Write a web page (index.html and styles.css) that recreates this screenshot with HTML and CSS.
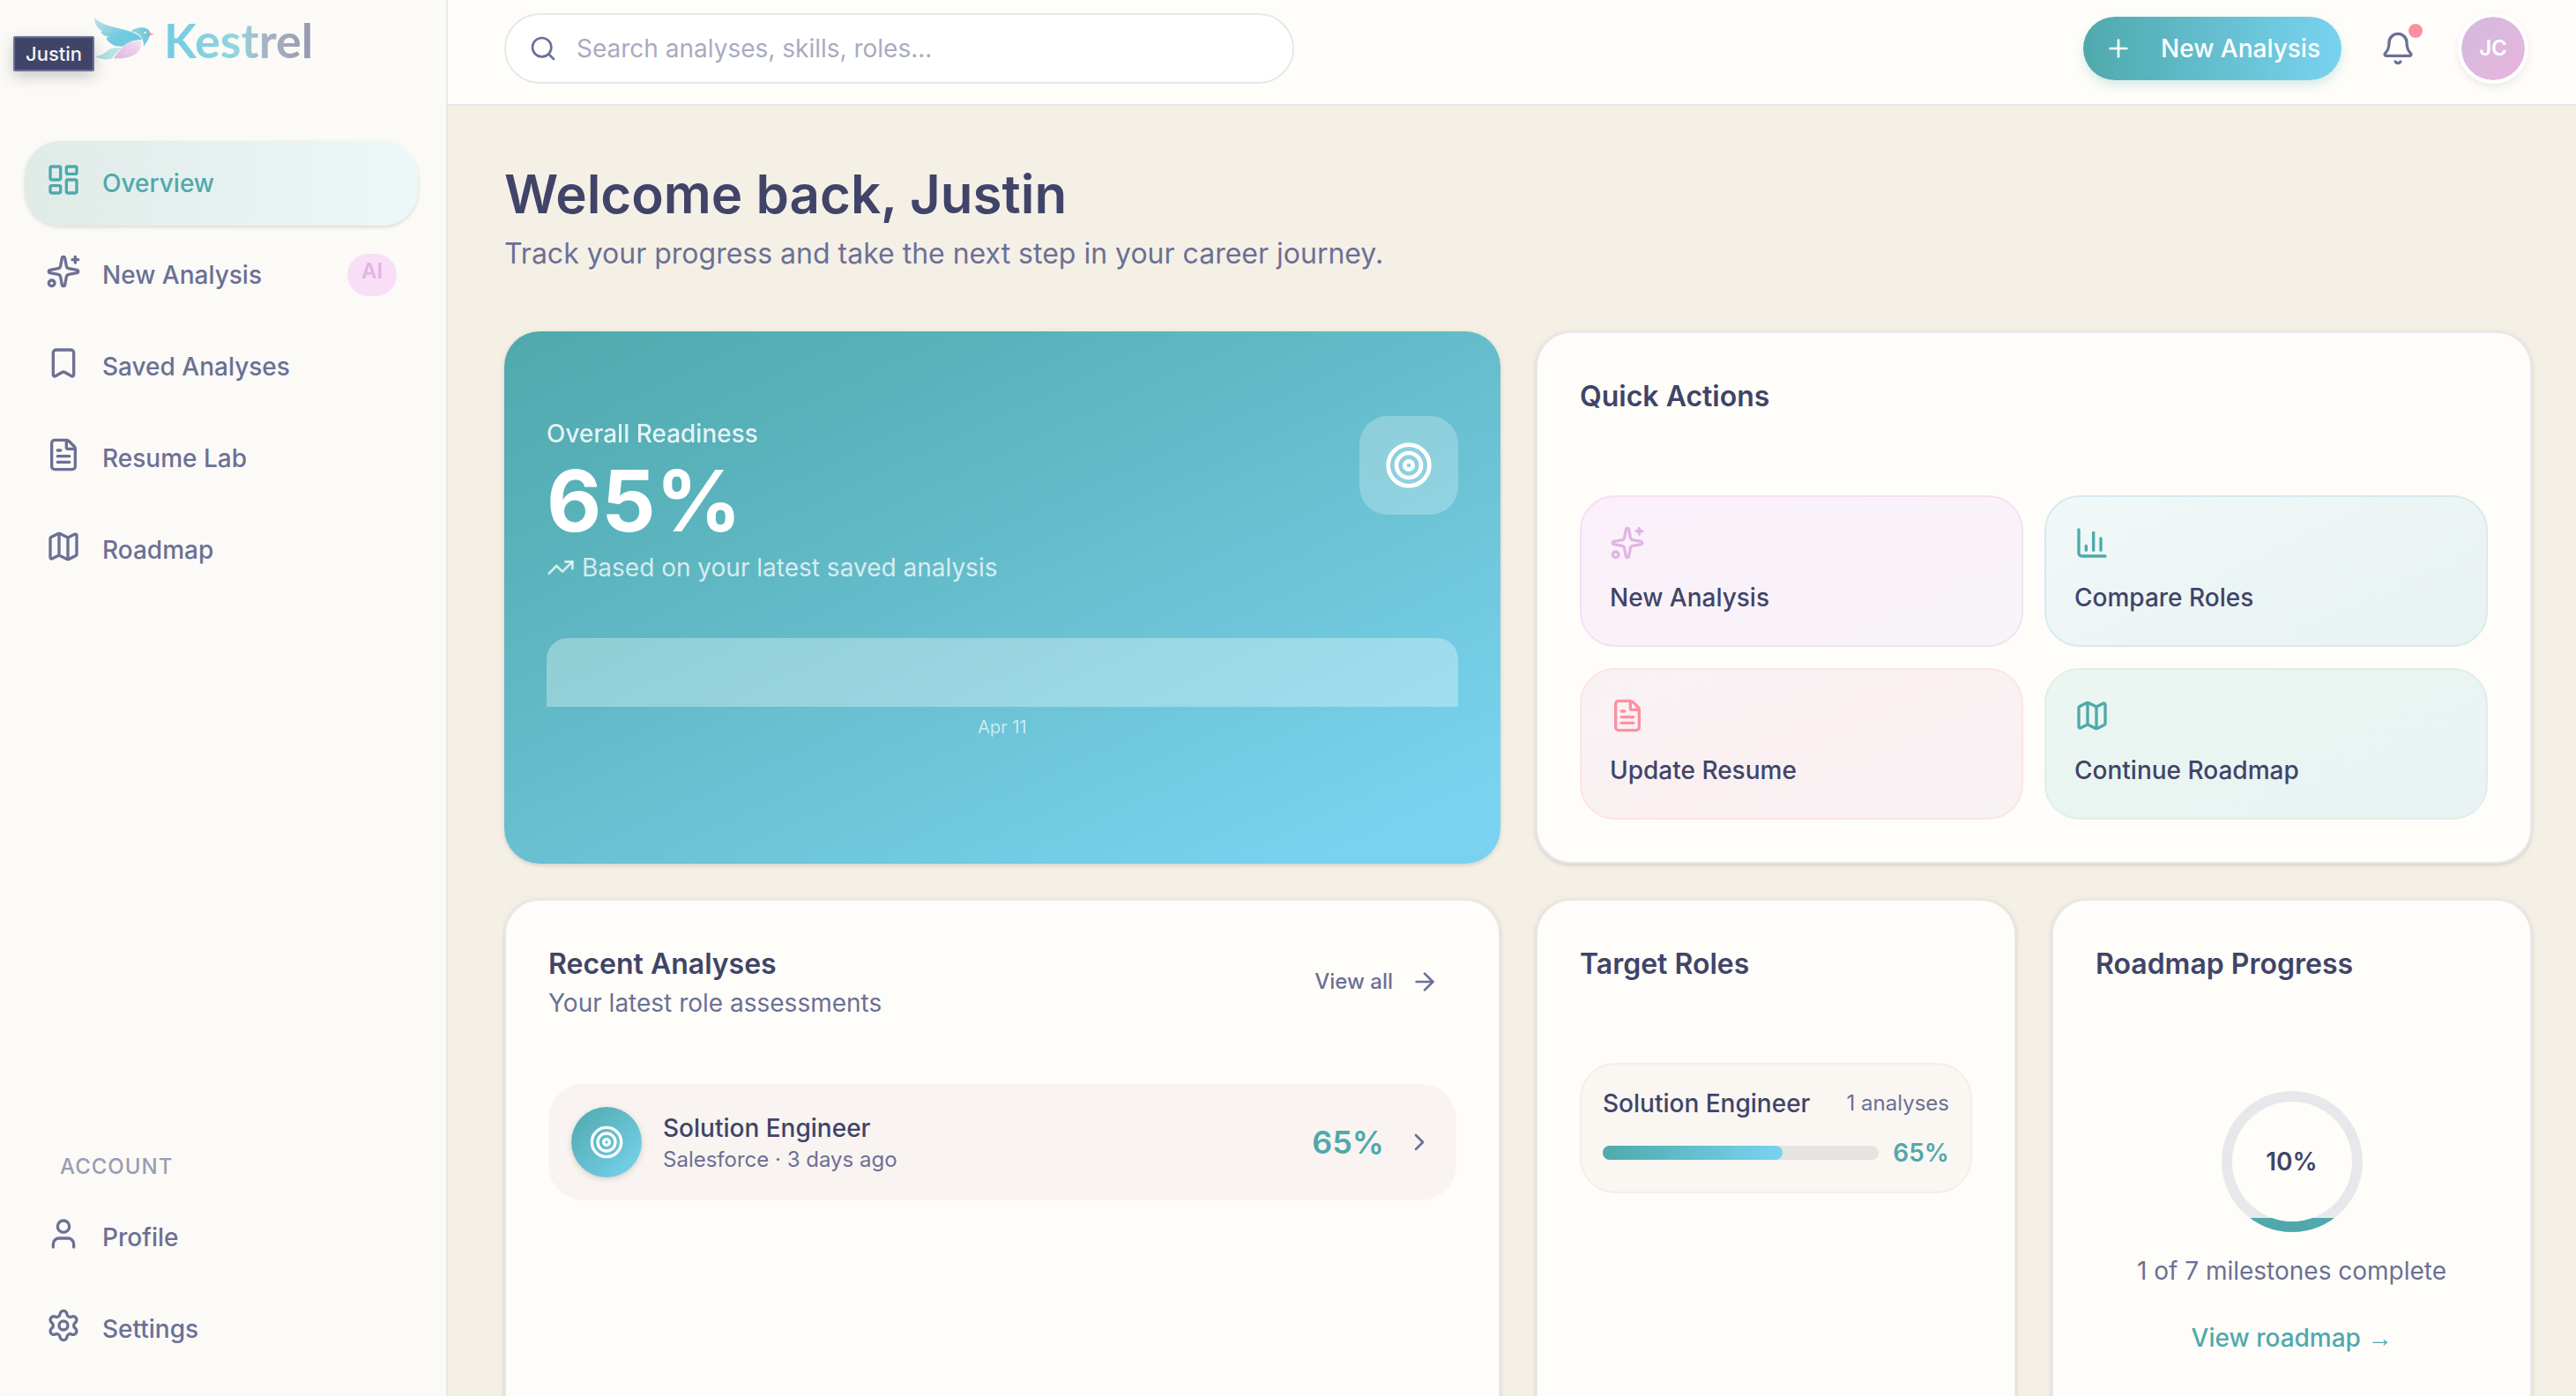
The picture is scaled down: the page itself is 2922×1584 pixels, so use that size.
FILE: index.html
```html
<!DOCTYPE html>
<html lang="en">
<head>
<meta charset="utf-8">
<meta name="viewport" content="width=device-width, initial-scale=1">
<title>Kestrel – Overview</title>
<link rel="stylesheet" href="styles.css">
</head>
<body>
<svg class="sprite" aria-hidden="true">
  <symbol id="i-dashboard" viewBox="0 0 24 24"><rect width="7" height="9" x="3" y="3" rx="1"/><rect width="7" height="5" x="14" y="3" rx="1"/><rect width="7" height="9" x="14" y="12" rx="1"/><rect width="7" height="5" x="3" y="16" rx="1"/></symbol>
  <symbol id="i-sparkles" viewBox="0 0 24 24"><path d="M11.017 2.814a1 1 0 0 1 1.966 0l1.051 5.558a2 2 0 0 0 1.594 1.594l5.558 1.051a1 1 0 0 1 0 1.966l-5.558 1.051a2 2 0 0 0-1.594 1.594l-1.051 5.558a1 1 0 0 1-1.966 0l-1.051-5.558a2 2 0 0 0-1.594-1.594l-5.558-1.051a1 1 0 0 1 0-1.966l5.558-1.051a2 2 0 0 0 1.594-1.594z"/><path d="M20 2v4"/><path d="M22 4h-4"/><circle cx="4" cy="20" r="2"/></symbol>
  <symbol id="i-bookmark" viewBox="0 0 24 24"><path d="M17 3a2 2 0 0 1 2 2v15a1 1 0 0 1-1.496.868l-4.512-2.578a2 2 0 0 0-1.984 0l-4.512 2.578A1 1 0 0 1 5 20V5a2 2 0 0 1 2-2z"/></symbol>
  <symbol id="i-file" viewBox="0 0 24 24"><path d="M6 22a2 2 0 0 1-2-2V4a2 2 0 0 1 2-2h8a2.4 2.4 0 0 1 1.704.706l3.588 3.588A2.4 2.4 0 0 1 20 8v12a2 2 0 0 1-2 2z"/><path d="M14 2v5a1 1 0 0 0 1 1h5"/><path d="M10 9H8"/><path d="M16 13H8"/><path d="M16 17H8"/></symbol>
  <symbol id="i-map" viewBox="0 0 24 24"><path d="M14.106 5.553a2 2 0 0 0 1.788 0l3.659-1.83A1 1 0 0 1 21 4.619v12.764a1 1 0 0 1-.553.894l-4.553 2.277a2 2 0 0 1-1.788 0l-4.212-2.106a2 2 0 0 0-1.788 0l-3.659 1.83A1 1 0 0 1 3 19.381V6.618a1 1 0 0 1 .553-.894l4.553-2.277a2 2 0 0 1 1.788 0z"/><path d="M15 5.764v15"/><path d="M9 3.236v15"/></symbol>
  <symbol id="i-user" viewBox="0 0 24 24"><path d="M19 21v-2a4 4 0 0 0-4-4H9a4 4 0 0 0-4 4v2"/><circle cx="12" cy="7" r="4"/></symbol>
  <symbol id="i-settings" viewBox="0 0 24 24"><path d="M9.671 4.136a2.34 2.34 0 0 1 4.659 0 2.34 2.34 0 0 0 3.319 1.915 2.34 2.34 0 0 1 2.33 4.033 2.34 2.34 0 0 0 0 3.831 2.34 2.34 0 0 1-2.33 4.033 2.34 2.34 0 0 0-3.319 1.915 2.34 2.34 0 0 1-4.659 0 2.34 2.34 0 0 0-3.32-1.915 2.34 2.34 0 0 1-2.33-4.033 2.34 2.34 0 0 0 0-3.831A2.34 2.34 0 0 1 6.35 6.051a2.34 2.34 0 0 0 3.319-1.915"/><circle cx="12" cy="12" r="3"/></symbol>
  <symbol id="i-search" viewBox="0 0 24 24"><path d="m21 21-4.34-4.34"/><circle cx="11" cy="11" r="8"/></symbol>
  <symbol id="i-plus" viewBox="0 0 24 24"><path d="M5 12h14"/><path d="M12 5v14"/></symbol>
  <symbol id="i-bell" viewBox="0 0 24 24"><path d="M10.268 21a2 2 0 0 0 3.464 0"/><path d="M3.262 15.326A1 1 0 0 0 4 17h16a1 1 0 0 0 .74-1.673C19.41 13.956 18 12.499 18 8A6 6 0 0 0 6 8c0 4.499-1.411 5.956-2.738 7.326"/></symbol>
  <symbol id="i-trend" viewBox="0 0 24 24"><path d="M16 7h6v6"/><path d="m22 7-8.500 8.500-5-5L2 17"/></symbol>
  <symbol id="i-target" viewBox="0 0 24 24"><circle cx="12" cy="12" r="10"/><circle cx="12" cy="12" r="6"/><circle cx="12" cy="12" r="2"/></symbol>
  <symbol id="i-chart" viewBox="0 0 24 24"><path d="M3 3v16a2 2 0 0 0 2 2h16"/><path d="M18 17V9"/><path d="M13 17V5"/><path d="M8 17v-3"/></symbol>
  <symbol id="i-arrow" viewBox="0 0 24 24"><path d="M5 12h14"/><path d="m12 5 7 7-7 7"/></symbol>
  <symbol id="i-chevron" viewBox="0 0 24 24"><path d="m9 18 6-6-6-6"/></symbol>
</svg>

<div class="app">
  <aside class="sidebar">
    <a class="brand" href="#">
      <svg class="brand-mark" viewBox="318 58 208 150" aria-hidden="true">
        <defs>
          <linearGradient id="wing" x1="0" y1="0" x2="1" y2="1"><stop offset="0" stop-color="#c3e4e4"/><stop offset=".55" stop-color="#74cbe0"/><stop offset="1" stop-color="#6cc6dd"/></linearGradient>
          <linearGradient id="head" x1="0" y1="0" x2="1" y2="0"><stop offset="0" stop-color="#9ad6dd"/><stop offset="1" stop-color="#6ac4de"/></linearGradient>
          <linearGradient id="belly" x1="0" y1="1" x2="1" y2="0"><stop offset="0" stop-color="#dfb3e2"/><stop offset="1" stop-color="#f3e1f1"/></linearGradient>
          <linearGradient id="tail" x1="0" y1="0" x2="1" y2="0"><stop offset="0" stop-color="#a8dce0"/><stop offset="1" stop-color="#bfe3e2"/></linearGradient>
        </defs>
        <path fill="url(#wing)" d="M320 61C345 85 380 92 410 99C450 108 478 120 482 137C455 136 436 143 420 158C396 162 376 153 364 138C358 131 364 127 374 124C360 127 346 120 341 109C352 110 344 104 336 99C325 90 320 76 320 61Z"/>
        <path fill="url(#head)" d="M444 106C460 94 485 91 500 99C509 104 511 113 509 122C505 137 494 148 488 160C489 130 474 114 444 106Z"/>
        <path fill="#ff8fa3" d="M507 111L523 118L508 122Z"/>
        <circle cx="493" cy="112" r="4" fill="#e6ece9"/>
        <path fill="url(#belly)" d="M386 200C400 180 412 160 430 149C446 140 466 138 479 142C482 160 474 178 452 190C430 200 408 200 386 200Z"/>
        <path fill="url(#tail)" d="M321 193C345 191 354 182 366 172C378 163 394 164 410 164C398 177 388 190 378 201C360 206 342 203 321 193Z"/>
      </svg>
      <span class="brand-name">Kestrel</span>
    </a>
    <div class="tooltip" role="tooltip">Justin</div>

    <nav class="nav" aria-label="Main">
      <a class="nav-item is-active" href="#"><svg class="icon icon-lg"><use href="#i-dashboard"/></svg><span>Overview</span></a>
      <a class="nav-item" href="#"><svg class="icon icon-lg"><use href="#i-sparkles"/></svg><span>New Analysis</span><span class="badge">AI</span></a>
      <a class="nav-item" href="#"><svg class="icon icon-lg"><use href="#i-bookmark"/></svg><span>Saved Analyses</span></a>
      <a class="nav-item" href="#"><svg class="icon icon-lg"><use href="#i-file"/></svg><span>Resume Lab</span></a>
      <a class="nav-item" href="#"><svg class="icon icon-lg"><use href="#i-map"/></svg><span>Roadmap</span></a>
    </nav>
    <nav class="nav nav-account" aria-labelledby="account-title">
      <h2 class="nav-title" id="account-title">ACCOUNT</h2>
      <a class="nav-item" href="#"><svg class="icon icon-lg"><use href="#i-user"/></svg><span>Profile</span></a>
      <a class="nav-item" href="#"><svg class="icon icon-lg"><use href="#i-settings"/></svg><span>Settings</span></a>
    </nav>
  </aside>

  <div class="page">
    <header class="topbar">
      <label class="search">
        <svg class="icon"><use href="#i-search"/></svg>
        <input type="search" aria-label="Search" placeholder="Search analyses, skills, roles...">
      </label>
      <div class="topbar-actions">
        <button class="btn-primary" type="button"><svg class="icon"><use href="#i-plus"/></svg>New Analysis</button>
        <button class="bell" type="button" aria-label="Notifications"><svg class="icon icon-lg"><use href="#i-bell"/></svg><span class="bell-dot"></span></button>
        <button class="avatar" type="button">JC</button>
      </div>
    </header>

    <main class="content">
      <header class="welcome">
        <h1>Welcome back, Justin</h1>
        <p>Track your progress and take the next step in your career journey.</p>
      </header>

      <div class="grid">
        <section class="hero wide">
          <div class="hero-top">
            <div>
              <p class="hero-label">Overall Readiness</p>
              <p class="hero-value">65%</p>
              <p class="hero-note"><svg class="icon"><use href="#i-trend"/></svg>Based on your latest saved analysis</p>
            </div>
            <div class="hero-icon"><svg class="icon icon-xl"><use href="#i-target"/></svg></div>
          </div>
          <div class="hero-chart">
            <div class="hero-bar"></div>
            <span class="hero-date">Apr 11</span>
          </div>
        </section>

        <section class="card wide">
          <h2 class="card-title">Quick Actions</h2>
          <div class="tiles">
            <a class="tile tile-lilac" href="#"><svg class="icon icon-lg"><use href="#i-sparkles"/></svg><span>New Analysis</span></a>
            <a class="tile tile-sky" href="#"><svg class="icon icon-lg"><use href="#i-chart"/></svg><span>Compare Roles</span></a>
            <a class="tile tile-rose" href="#"><svg class="icon icon-lg"><use href="#i-file"/></svg><span>Update Resume</span></a>
            <a class="tile tile-mint" href="#"><svg class="icon icon-lg"><use href="#i-map"/></svg><span>Continue Roadmap</span></a>
          </div>
        </section>

        <section class="card card-tall wide">
          <div class="card-head">
            <div>
              <h2 class="card-title">Recent Analyses</h2>
              <p class="card-sub">Your latest role assessments</p>
            </div>
            <a class="view-all" href="#">View all<svg class="icon"><use href="#i-arrow"/></svg></a>
          </div>
          <a class="analysis" href="#">
            <span class="analysis-icon"><svg class="icon icon-lg"><use href="#i-target"/></svg></span>
            <span class="analysis-text"><span class="item-title">Solution Engineer</span><span class="item-sub">Salesforce · 3 days ago</span></span>
            <span class="analysis-score">65%</span>
            <svg class="icon"><use href="#i-chevron"/></svg>
          </a>
        </section>

        <section class="card card-tall">
          <h2 class="card-title">Target Roles</h2>
          <div class="role">
            <div class="role-head"><span class="item-title">Solution Engineer</span><span class="item-sub">1 analyses</span></div>
            <div class="role-progress">
              <div class="track"><div class="track-fill" style="width:65%"></div></div>
              <span class="role-score">65%</span>
            </div>
          </div>
        </section>

        <section class="card card-tall">
          <h2 class="card-title">Roadmap Progress</h2>
          <div class="roadmap">
            <div class="ring"><div class="ring-hole">10%</div></div>
            <p>1 of 7 milestones complete</p>
            <a href="#">View roadmap <span class="link-arrow">→</span></a>
          </div>
        </section>
      </div>
    </main>
  </div>
</div>
</body>
</html>
```
FILE: styles.css
```css
:root {
  --ink: #404468;
  --muted: #6b7095;
  --faint: #9a9db3;
  --teal: #4fa9ac;
  --sky: #79d3f0;
  --line: #e7e8ec;
  --paper: #fefdf9;
  --sand: #f5f0e6;
}

* { box-sizing: border-box; }

body {
  margin: 0;
  background: var(--sand);
  color: var(--ink);
  font-family: Inter, "Liberation Sans", sans-serif;
  font-size: 28px;
  line-height: 40px;
}

h1, h2, p { margin: 0; }
a { color: inherit; text-decoration: none; }
button { border: 0; padding: 0; font: inherit; cursor: pointer; }

.sprite { display: none; }

.icon {
  width: 32px;
  height: 32px;
  flex: none;
  fill: none;
  stroke: currentColor;
  stroke-width: 2;
  stroke-linecap: round;
  stroke-linejoin: round;
}
.icon-lg { width: 40px; height: 40px; }
.icon-xl { width: 56px; height: 56px; }

.app { display: flex; height: 100vh; }

/* Sidebar */
.sidebar {
  position: relative;
  display: flex;
  flex-direction: column;
  flex: none;
  width: 508px;
  padding: 16px 32px 28px 28px;
  background: #fbfaf7;
  border-right: 2px solid var(--line);
}

.brand {
  display: flex;
  align-items: center;
  gap: 10px;
  height: 56px;
  padding-left: 78px;
  margin-bottom: 88px;
}
.brand-mark { width: 70px; height: 50px; }
.brand-name {
  padding-top: 4px;
  font-family: Lato, "Open Sans", sans-serif;
  font-size: 54px;
  font-weight: 700;
  line-height: 56px;
  color: transparent;
  background: linear-gradient(90deg, #72cbe4, #93d5df 50%, #a9b3c6 68%, #9597ae);
  background-clip: text;
  -webkit-background-clip: text;
}

.tooltip {
  position: absolute;
  left: 15px;
  top: 41px;
  padding: 0 12px;
  border: 2px solid var(--muted);
  border-radius: 2px;
  background: var(--ink);
  color: #f5f4f1;
  font-size: 22px;
  font-weight: 500;
  line-height: 36px;
  box-shadow: 0 6px 16px rgba(64, 60, 60, .25);
}

.nav { display: flex; flex-direction: column; gap: 8px; }
.nav-account { margin-top: auto; }
.nav-title {
  padding-left: 40px;
  margin-bottom: 8px;
  color: var(--faint);
  font-size: 24px;
  font-weight: 500;
  line-height: 32px;
  letter-spacing: 1px;
}
.nav-item {
  display: flex;
  align-items: center;
  gap: 24px;
  height: 96px;
  padding: 0 24px;
  border-radius: 40px;
  color: var(--muted);
  font-weight: 500;
}
.nav-item .icon { margin-bottom: 8px; }
.nav-item.is-active {
  color: var(--teal);
  background: linear-gradient(90deg, #e0ebe8, #eef7f7);
  box-shadow: 0 2px 4px rgba(90, 70, 60, .18);
}
.badge {
  margin-left: auto;
  width: 56px;
  height: 48px;
  border-radius: 24px;
  background: #f8dff6;
  color: #e0b5e3;
  font-size: 24px;
  font-weight: 600;
  line-height: 40px;
  text-align: center;
}

/* Top bar */
.page { display: flex; flex-direction: column; flex: 1; min-width: 0; }
.topbar {
  display: flex;
  flex: none;
  align-items: flex-start;
  justify-content: space-between;
  height: 120px;
  padding: 15px 50px 0 64px;
  background: var(--paper);
  border-bottom: 2px solid var(--line);
}
.search {
  display: flex;
  align-items: center;
  gap: 22px;
  width: 896px;
  height: 80px;
  padding: 0 26px;
  border: 2px solid var(--line);
  border-radius: 40px;
  background: #fff;
  color: var(--muted);
}
.search input {
  flex: 1;
  min-width: 0;
  padding: 0;
  border: 0;
  outline: 0;
  background: none;
  color: var(--ink);
  font: inherit;
}
.search input::placeholder { color: #a9abc0; opacity: 1; }

.topbar-actions { display: flex; align-items: center; gap: 24px; }
.btn-primary {
  display: flex;
  align-items: center;
  gap: 32px;
  height: 72px;
  padding: 0 24px;
  border-radius: 36px;
  background: linear-gradient(90deg, var(--teal), var(--sky));
  color: #fff;
  font-weight: 500;
  box-shadow: 0 6px 12px rgba(79, 169, 172, .22);
}
.bell {
  position: relative;
  display: grid;
  place-items: center;
  width: 80px;
  height: 80px;
  background: none;
  color: var(--muted);
}
.bell-dot {
  position: absolute;
  top: 8px;
  right: 8px;
  width: 24px;
  height: 24px;
  border: 4px solid #fff;
  border-radius: 50%;
  background: #ff8fa3;
}
.avatar {
  width: 80px;
  height: 80px;
  margin: 0 4px;
  border: 4px solid #fff;
  border-radius: 50%;
  background: linear-gradient(135deg, #d3bae0, #e8b5dc) padding-box;
  color: #fff;
  font-size: 24px;
  font-weight: 600;
  box-shadow: 0 4px 8px rgba(64, 68, 104, .1);
}

/* Content */
.content {
  flex: 1;
  min-height: 0;
  overflow: auto;
  scrollbar-width: none;
  padding: 64px 50px 64px 64px;
}
.welcome { margin-bottom: 64px; }
.welcome h1 { font-size: 60px; font-weight: 600; line-height: 72px; }
.welcome p { margin-top: 8px; color: var(--muted); font-size: 32px; line-height: 48px; }

.grid { display: grid; grid-template-columns: repeat(4, minmax(0, 1fr)); gap: 40px; }
.wide { grid-column: span 2; }

.card, .hero {
  border-radius: 40px;
  box-shadow: 0 2px 4px rgba(64, 60, 90, .14), 0 0 8px rgba(150, 110, 90, .08);
}
.card { padding: 48px; border: 2px solid var(--line); background: var(--paper); }
.card-tall { min-height: 640px; }
.card-title { font-size: 32px; font-weight: 600; line-height: 48px; }
.card-sub { color: var(--muted); line-height: 40px; }

.hero {
  padding: 96px 48px 48px;
  background: linear-gradient(155deg, var(--teal), #5cb5bf 30%, #6cc3d6 60%, var(--sky) 92%);
  color: #fff;
}
.hero-top { display: flex; justify-content: space-between; align-items: flex-start; }
.hero-label { font-weight: 500; opacity: .85; }
.hero-value { margin: 8px 0; font-size: 96px; font-weight: 700; line-height: 96px; }
.hero-note { display: flex; align-items: center; gap: 8px; color: rgba(255, 255, 255, .75); }
.hero-icon {
  display: grid;
  place-items: center;
  width: 112px;
  height: 112px;
  border-radius: 32px;
  background: rgba(255, 255, 255, .25);
}
.hero-chart { margin-top: 60px; text-align: center; }
.hero-bar { height: 78px; border-radius: 24px 24px 0 0; background: rgba(255, 255, 255, .32); }
.hero-date { display: block; margin-top: 8px; font-size: 20px; line-height: 30px; opacity: .65; }

.tiles { display: grid; grid-template-columns: 1fr 1fr; gap: 24px; margin-top: 88px; }
.tile {
  display: flex;
  flex-direction: column;
  gap: 22px;
  min-height: 172px;
  padding: 32px 32px 24px;
  border: 2px solid;
  border-radius: 40px;
  font-weight: 500;
}
.tile span { color: var(--ink); }
.tile-lilac { color: #e0b5e3; border-color: #f6dff5; background: linear-gradient(155deg, #fbf0fa, #f8f4f8); }
.tile-sky { color: var(--teal); border-color: #d6ebf0; background: linear-gradient(155deg, #f0f8f8, #e8f2f1); }
.tile-rose { color: #ff8fa3; border-color: #fde3e6; background: linear-gradient(155deg, #f9f2f4, #faf0f2 50%, #f7f2f3); }
.tile-mint { color: var(--teal); border-color: #dfeeeb; background: linear-gradient(155deg, #ebf6f1, #e9f3f3); }

.card-head { display: flex; justify-content: space-between; align-items: center; }
.view-all {
  display: flex;
  align-items: center;
  gap: 20px;
  padding-right: 20px;
  color: var(--muted);
  font-size: 24px;
  font-weight: 500;
}

.item-title { font-weight: 500; line-height: 40px; color: var(--ink); }
.item-sub { font-size: 24px; line-height: 32px; color: var(--muted); }

.analysis {
  display: flex;
  align-items: center;
  gap: 24px;
  margin-top: 72px;
  padding: 26px;
  border-radius: 40px;
  background: #f9f4f1;
  color: var(--muted);
}
.analysis-icon {
  display: grid;
  place-items: center;
  width: 80px;
  height: 80px;
  border-radius: 50%;
  background: linear-gradient(135deg, var(--teal), var(--sky));
  color: #fff;
  box-shadow: 0 2px 6px rgba(120, 90, 70, .25);
}
.analysis-text { display: flex; flex-direction: column; flex: 1; }
.analysis-score { color: var(--teal); font-size: 36px; font-weight: 600; }

.role {
  margin-top: 88px;
  padding: 24px;
  border: 2px solid #f5eee7;
  border-radius: 40px;
  background: #faf6f2;
}
.role-head { display: flex; justify-content: space-between; align-items: center; }
.role-progress { display: flex; align-items: center; gap: 16px; margin-top: 16px; }
.track { flex: 1; height: 16px; border-radius: 8px; background: #e6e4e0; }
.track-fill { height: 16px; border-radius: 8px; background: linear-gradient(90deg, var(--teal), var(--sky)); }
.role-score { color: var(--teal); font-weight: 600; }

.roadmap { display: flex; flex-direction: column; align-items: center; margin-top: 120px; }
.ring {
  display: grid;
  place-items: center;
  width: 160px;
  height: 160px;
  border-radius: 50%;
  background: linear-gradient(0deg, var(--teal) 10%, var(--line) 10%);
}
.ring-hole {
  display: grid;
  place-items: center;
  width: 136px;
  height: 136px;
  border-radius: 50%;
  background: var(--paper);
  font-weight: 600;
}
.roadmap p { margin-top: 24px; color: var(--muted); }
.roadmap a { margin-top: 36px; color: var(--teal); font-weight: 500; }
.link-arrow { font-family: "Liberation Sans", sans-serif; font-weight: 400; }
```
